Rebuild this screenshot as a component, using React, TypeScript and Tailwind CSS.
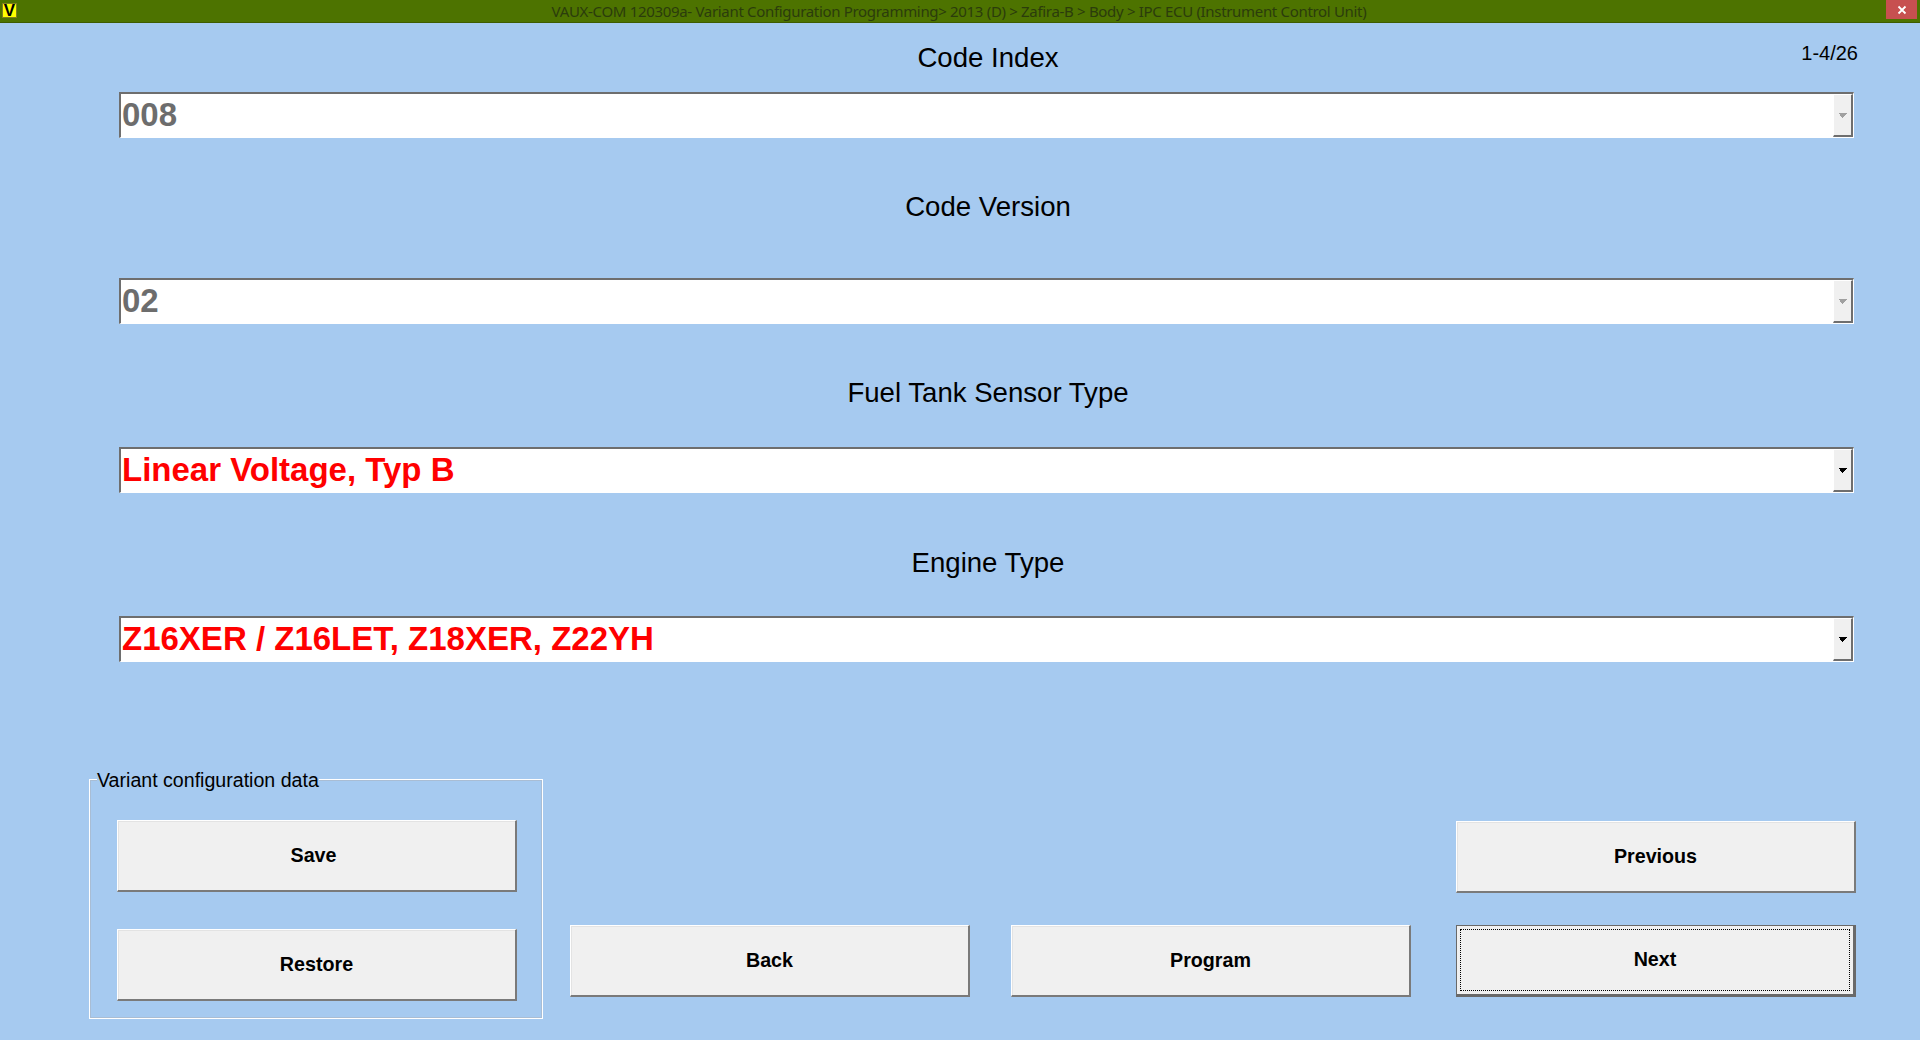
import React from "react";

const sans = "font-['Liberation_Sans',Arial,sans-serif]";

function Arrow({ disabled }: { disabled?: boolean }) {
  return (
    <svg width="8" height="5" viewBox="0 0 8 5" shapeRendering="crispEdges" className="block">
      <path d="M0 0h8v1H7v1H6v1H5v1H4v1H3V4H2V3H1V1H0z" fill={disabled ? "#a0a0a0" : "#000000"} />
    </svg>
  );
}

function Combo({ value, disabled }: { value: string; disabled?: boolean }) {
  return (
    <div className="h-[46px] w-[1735px] flex border-t-2 border-l-2 border-t-[#6e6e6e] border-l-[#6e6e6e] border-r border-b border-r-white border-b-white bg-white">
      <div className={`flex-1 pl-[1px] text-[33px] leading-[41px] font-bold ${disabled ? "text-[#6d6d6d]" : "text-[#ff0000]"}`}>
        {value}
      </div>
      <div className="w-[20px] flex items-center justify-center border-t border-l border-white border-r-2 border-b-2 border-r-[#6e6e6e] border-b-[#6e6e6e] bg-[#f0f0f0]">
        <Arrow disabled={disabled} />
      </div>
    </div>
  );
}

function Btn({ label, focus, className = "" }: { label: string; focus?: boolean; className?: string }) {
  if (focus) {
    return (
      <button className={`w-[400px] h-[72px] bg-[#f0f0f0] border border-[#696969] border-r-[3px] border-b-[3px] p-[3px] text-[19.7px] font-bold text-black ${className}`}>
        <div className="h-full w-full flex items-center justify-center border border-dotted border-black">{label}</div>
      </button>
    );
  }
  return (
    <button className={`w-[400px] h-[72px] flex items-center justify-center bg-[#f0f0f0] border-t border-l border-t-white border-l-white border-r-2 border-b-2 border-r-[#7a7a7a] border-b-[#7a7a7a] shadow-[inset_1px_1px_0_#e3e3e3] text-[19.7px] font-bold text-black ${className}`}>
      {label}
    </button>
  );
}

function Label({ text }: { text: string }) {
  return <div className="h-[28px] pl-[3px] text-center text-[27.6px] leading-[28px] text-black">{text}</div>;
}

export default function App() {
  return (
    <div className={`w-[1920px] h-[1040px] overflow-hidden flex flex-col bg-[#a6caf0] ${sans}`}>
      <div className="h-[23px] shrink-0 flex items-start bg-[#4d7300] border-b border-b-[#3e5c00]">
        <div className="ml-[2px] mt-[3px] w-[15px] h-[15px] bg-[#ffff00] border border-[#7f7f20] flex items-center justify-center text-[17px] leading-none font-bold text-black">
          V
        </div>
        <div className="flex-1 h-[22px] pl-[15px] text-center text-[15px] leading-[23px] text-[#2b3c0c] font-['Noto_Sans',sans-serif] tracking-[-0.32px]">
          VAUX-COM 120309a- Variant Configuration Programming&gt; 2013 (D) &gt; Zafira-B &gt; Body &gt; IPC ECU (Instrument Control Unit)
        </div>
        <div className="mr-[3px] w-[31px] h-[19px] bg-[#c75050] flex items-center justify-center">
          <svg width="10" height="10" viewBox="0 0 10 10">
            <path d="M1.5 1.5l7 7M8.5 1.5l-7 7" stroke="#ffffff" strokeWidth="1.8" fill="none" />
          </svg>
        </div>
      </div>

      <div className="pl-[119px] pt-[21px]">
        <div className="w-[1735px] mb-[20px] grid grid-cols-[1fr_auto_1fr] items-start">
          <div />
          <Label text="Code Index" />
          <div className="text-right text-[20px] leading-[28px] -mr-[4px] -mt-[5px] text-black">1-4/26</div>
        </div>
        <Combo value="008" disabled />
        <div className="w-[1735px] mt-[55px] mb-[57px]">
          <Label text="Code Version" />
        </div>
        <Combo value="02" disabled />
        <div className="w-[1735px] mt-[55px] mb-[40px]">
          <Label text="Fuel Tank Sensor Type" />
        </div>
        <Combo value="Linear Voltage, Typ B" />
        <div className="w-[1735px] mt-[56px] mb-[39px]">
          <Label text="Engine Type" />
        </div>
        <Combo value="Z16XER / Z16LET, Z18XER, Z22YH" />
      </div>

      <div className="pl-[89px] mt-[117px] flex items-end">
        <div className="relative w-[454px] h-[240px] border border-white shadow-[0_0_0_1px_#a9bdd4_inset] pl-[27px] pt-[40px] flex flex-col gap-[37px]">
          <div className="absolute left-[7px] -top-[12px] bg-[#a6caf0] text-[19.6px] leading-[24px] text-black">
            Variant configuration data
          </div>
          <Btn label="Save" className="pr-[6px]" />
          <Btn label="Restore" />
        </div>
        <div className="ml-[27px] mb-[22px] flex gap-[41px]">
          <Btn label="Back" />
          <Btn label="Program" />
        </div>
        <div className="ml-[45px] mb-[22px] flex flex-col gap-[32px]">
          <Btn label="Previous" />
          <Btn label="Next" focus />
        </div>
      </div>
    </div>
  );
}
